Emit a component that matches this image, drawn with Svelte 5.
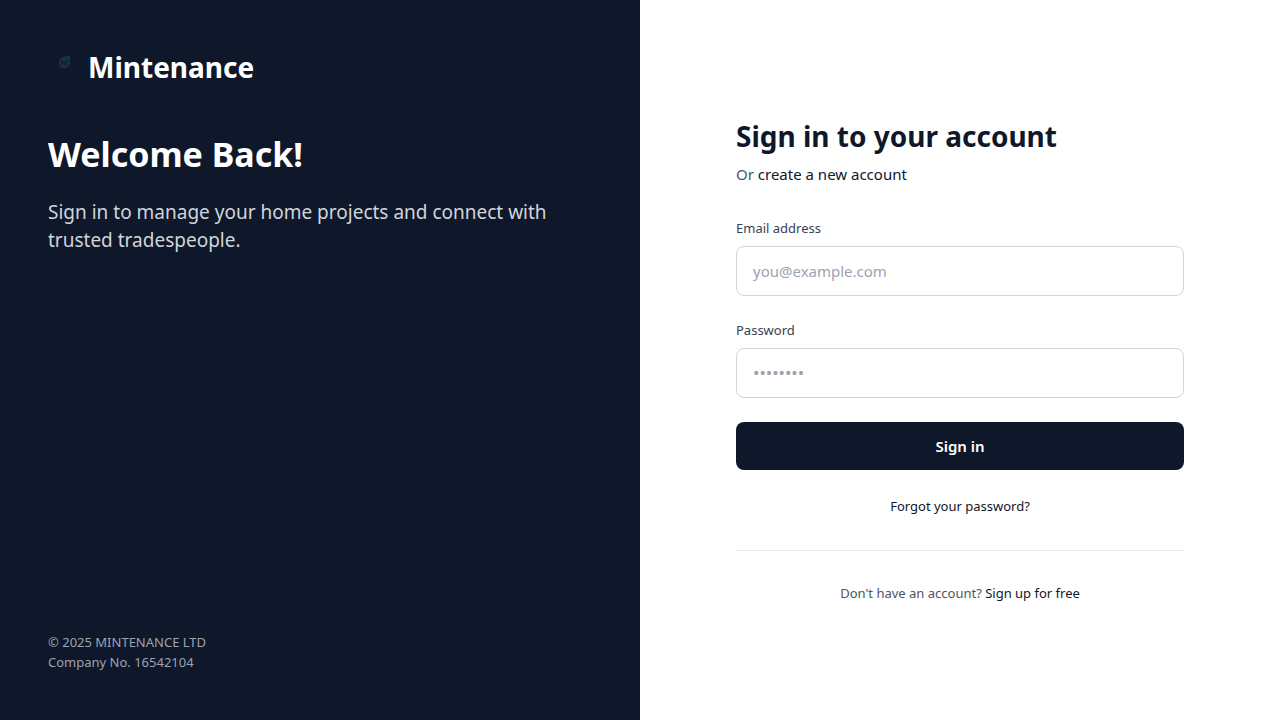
<script>
  let email = $state('');
  let password = $state('');
</script>

<main class="page">
  <section class="brand">
    <div>
      <div class="logo">
        <svg width="32" height="32" viewBox="0 0 32 32" aria-hidden="true">
          <path d="M22 8C17 8 11 9.500 11 14.500C11 16.500 11.500 18 12.500 19L12 21L14 19.800C19 21 22.500 18 22.300 13.500C22.200 11.500 22 10 22 8Z" fill="#15344b" />
          <path d="M13.500 17.500V12.800L16.500 15.800L19.500 12.500V14.500M17 17.200H20" fill="none" stroke="#0f1d33" stroke-width="1.300" />
        </svg>
        <span>Mintenance</span>
      </div>
      <h1>Welcome Back!</h1>
      <p class="lead">Sign in to manage your home projects and connect with trusted tradespeople.</p>
    </div>
    <footer>
      <p>© 2025 MINTENANCE LTD</p>
      <p>Company No. 16542104</p>
    </footer>
  </section>

  <section class="panel">
    <div class="content">
      <h2>Sign in to your account</h2>
      <p class="sub">Or <a href="#register">create a new account</a></p>
      <form onsubmit={(event) => event.preventDefault()}>
        <div class="field">
          <label for="email">Email address</label>
          <input id="email" type="email" placeholder="you@example.com" bind:value={email} />
        </div>
        <div class="field">
          <label for="password">Password</label>
          <input id="password" type="password" placeholder="••••••••" bind:value={password} />
        </div>
        <button type="submit">Sign in</button>
        <a class="forgot" href="#forgot">Forgot your password?</a>
      </form>
      <p class="signup">Don't have an account? <a href="#signup">Sign up for free</a></p>
    </div>
  </section>
</main>

<style>
  :global(body) {
    margin: 0;
  }
  * {
    box-sizing: border-box;
  }
  .page {
    display: grid;
    grid-template-columns: 1fr 1fr;
    min-height: 100vh;
    font-family: "Segoe UI", "Noto Sans", "Open Sans", sans-serif;
    font-size: 15px;
    line-height: 24px;
    color: #0f172a;
    background: #fff;
  }
  h1, h2, p {
    margin: 0;
  }
  .brand {
    display: flex;
    flex-direction: column;
    justify-content: space-between;
    padding: 48px;
    background: #0f172a;
    color: #fff;
  }
  .logo {
    display: flex;
    align-items: flex-start;
    gap: 8px;
    margin-bottom: 48px;
    font-size: 28px;
    line-height: 38px;
    font-weight: 700;
  }
  h1 {
    margin-bottom: 24px;
    font-size: 34px;
    line-height: 40px;
    font-weight: 700;
  }
  .lead {
    font-size: 19px;
    line-height: 28px;
    color: #d1d5db;
  }
  footer {
    font-size: 13px;
    line-height: 20px;
    color: #9ca3af;
  }
  .panel {
    display: flex;
    align-items: center;
    justify-content: center;
    padding: 32px;
  }
  .content {
    width: 100%;
    max-width: 448px;
  }
  h2 {
    margin-bottom: 8px;
    font-size: 28px;
    line-height: 36px;
    font-weight: 700;
  }
  .sub {
    margin-bottom: 32px;
    color: #4b5563;
  }
  a {
    color: #0f172a;
    text-decoration: none;
  }
  form {
    display: flex;
    flex-direction: column;
    gap: 24px;
    padding-bottom: 32px;
    border-bottom: 1px solid #e5e7eb;
  }
  .field {
    display: flex;
    flex-direction: column;
    gap: 8px;
  }
  label {
    font-size: 13px;
    line-height: 20px;
    color: #374151;
  }
  input {
    width: 100%;
    height: 50px;
    padding: 12px 16px;
    border: 1px solid #d1d5db;
    border-radius: 8px;
    background: #fff;
    font: inherit;
    color: #111827;
  }
  input[type="password"] {
    font-size: 17px;
  }
  input::placeholder {
    color: #9ca3af;
  }
  button {
    padding: 12px 16px;
    border: 0;
    border-radius: 8px;
    background: #0f172a;
    color: #fff;
    font: inherit;
    font-weight: 600;
    cursor: pointer;
  }
  .forgot, .signup {
    font-size: 13px;
    text-align: center;
  }
  .forgot {
    line-height: 24px;
  }
  .signup {
    margin-top: 32px;
    line-height: 20px;
    color: #4b5563;
  }
</style>
